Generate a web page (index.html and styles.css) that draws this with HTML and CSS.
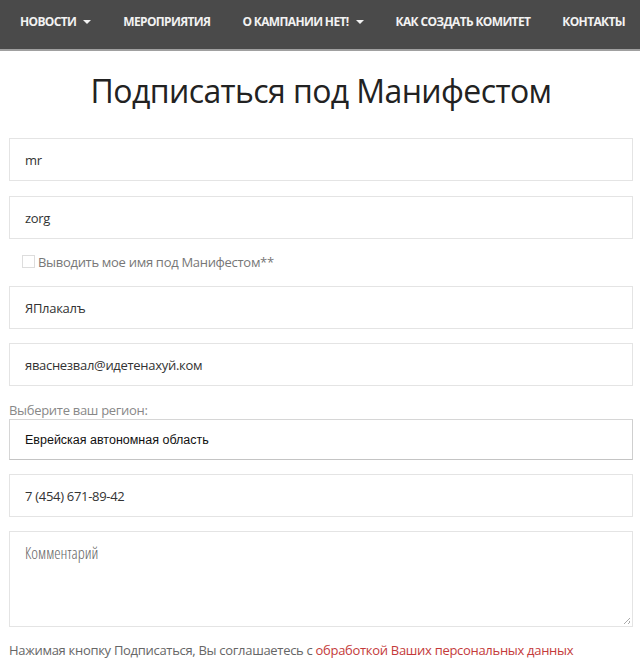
FILE: index.html
```html
<!DOCTYPE html>
<html lang="ru">
<head>
<meta charset="utf-8">
<title>Подписаться под Манифестом</title>
<link rel="stylesheet" href="styles.css">
</head>
<body>
<nav class="topnav">
  <ul class="menu">
    <li class="menu-item">НОВОСТИ <span class="caret"></span></li>
    <li class="menu-item">МЕРОПРИЯТИЯ</li>
    <li class="menu-item">О КАМПАНИИ НЕТ! <span class="caret"></span></li>
    <li class="menu-item">КАК СОЗДАТЬ КОМИТЕТ</li>
    <li class="menu-item">КОНТАКТЫ</li>
  </ul>
</nav>
<main class="page">
  <h1 class="title">Подписаться под Манифестом</h1>
  <form class="form">
    <div class="field">mr</div>
    <div class="field">zorg</div>
    <label class="check-row"><span class="checkbox"></span>Выводить мое имя под Манифестом**</label>
    <div class="field">ЯПлакалъ</div>
    <div class="field">яваснезвал@идетенахуй.ком</div>
    <div class="region-label">Выберите ваш регион:</div>
    <div class="select">Еврейская автономная область</div>
    <div class="field">7 (454) 671-89-42</div>
    <div class="textarea"><span class="placeholder">Комментарий</span><span class="grip"></span></div>
    <p class="agree">Нажимая кнопку Подписаться, Вы соглашаетесь с <a class="link" href="#">обработкой Ваших персональных данных</a></p>
  </form>
</main>
</body>
</html>
```

FILE: styles.css
```css
html, body {
  margin: 0;
  padding: 0;
  background: #fff;
}
body {
  font-family: "Open Sans", "Noto Sans", sans-serif;
  color: #333;
}
.topnav {
  background: #4a4a4a;
  height: 51px;
  border-bottom: 2px solid #a0a0a0;
  box-sizing: border-box;
}
.menu {
  list-style: none;
  margin: 0;
  padding: 0 0 0 20px;
  display: flex;
  align-items: center;
  height: 43px;
}
.menu-item {
  color: #f2f2f2;
  font-size: 12px;
  font-weight: 700;
  margin-right: 32px;
  display: flex;
  align-items: center;
  white-space: nowrap;
  letter-spacing: -0.65px;
}
.caret {
  display: inline-block;
  width: 0;
  height: 0;
  border-left: 4px solid transparent;
  border-right: 4px solid transparent;
  border-top: 4px solid #f2f2f2;
  margin-left: 7px;
}
.page {
  padding: 0 7px 0 9px;
}
.title {
  margin: 22px 0 29px;
  text-align: center;
  font-weight: 400;
  font-size: 32px;
  line-height: 36px;
  color: #222;
  letter-spacing: -0.6px;
}
.form {
  display: flex;
  flex-direction: column;
}
.field {
  height: 43px;
  box-sizing: border-box;
  border: 1px solid #e4e4e4;
  padding: 0 15px;
  display: flex;
  align-items: center;
  font-size: 13px;
  letter-spacing: -0.3px;
  color: #333;
  margin-bottom: 14px;
}
.field:first-child {
  margin-bottom: 15px;
}
.check-row {
  display: flex;
  align-items: center;
  margin: 2px 0 18px 13px;
  height: 13px;
  font-size: 13px;
  letter-spacing: -0.3px;
  color: #777;
}
.checkbox {
  width: 11px;
  height: 11px;
  border: 1px solid #ddd;
  margin-right: 3px;
  background: #fff;
}
.region-label {
  font-size: 13px;
  letter-spacing: -0.3px;
  color: #888;
  line-height: 18px;
  margin: 1px 0 0;
}
.select {
  height: 41px;
  box-sizing: border-box;
  border: 1px solid #d6d6d6;
  border-bottom-color: #c4c4c4;
  border-right-color: #cfcfcf;
  padding: 0 15px;
  display: flex;
  align-items: center;
  font-family: "Liberation Sans", Arial, sans-serif;
  font-size: 12.5px;
  color: #111;
  margin-bottom: 14px;
}
.textarea {
  position: relative;
  height: 96px;
  box-sizing: border-box;
  border: 1px solid #e4e4e4;
  padding: 10px 15px;
  margin-bottom: 14px;
}
.placeholder {
  display: inline-block;
  font-size: 16px;
  font-weight: 300;
  color: #666;
  font-stretch: 87%;
  letter-spacing: 0;
}
.grip {
  position: absolute;
  right: 2px;
  bottom: 2px;
  width: 6px;
  height: 6px;
  background: linear-gradient(135deg, transparent 45%, #aaa 45%, #aaa 55%, transparent 55%, transparent 75%, #aaa 75%, #aaa 85%, transparent 85%);
}
.agree {
  margin: 0;
  font-size: 13px;
  letter-spacing: -0.3px;
  line-height: 18px;
  color: #666;
}
.link {
  color: #c43a3a;
  text-decoration: none;
}
```
